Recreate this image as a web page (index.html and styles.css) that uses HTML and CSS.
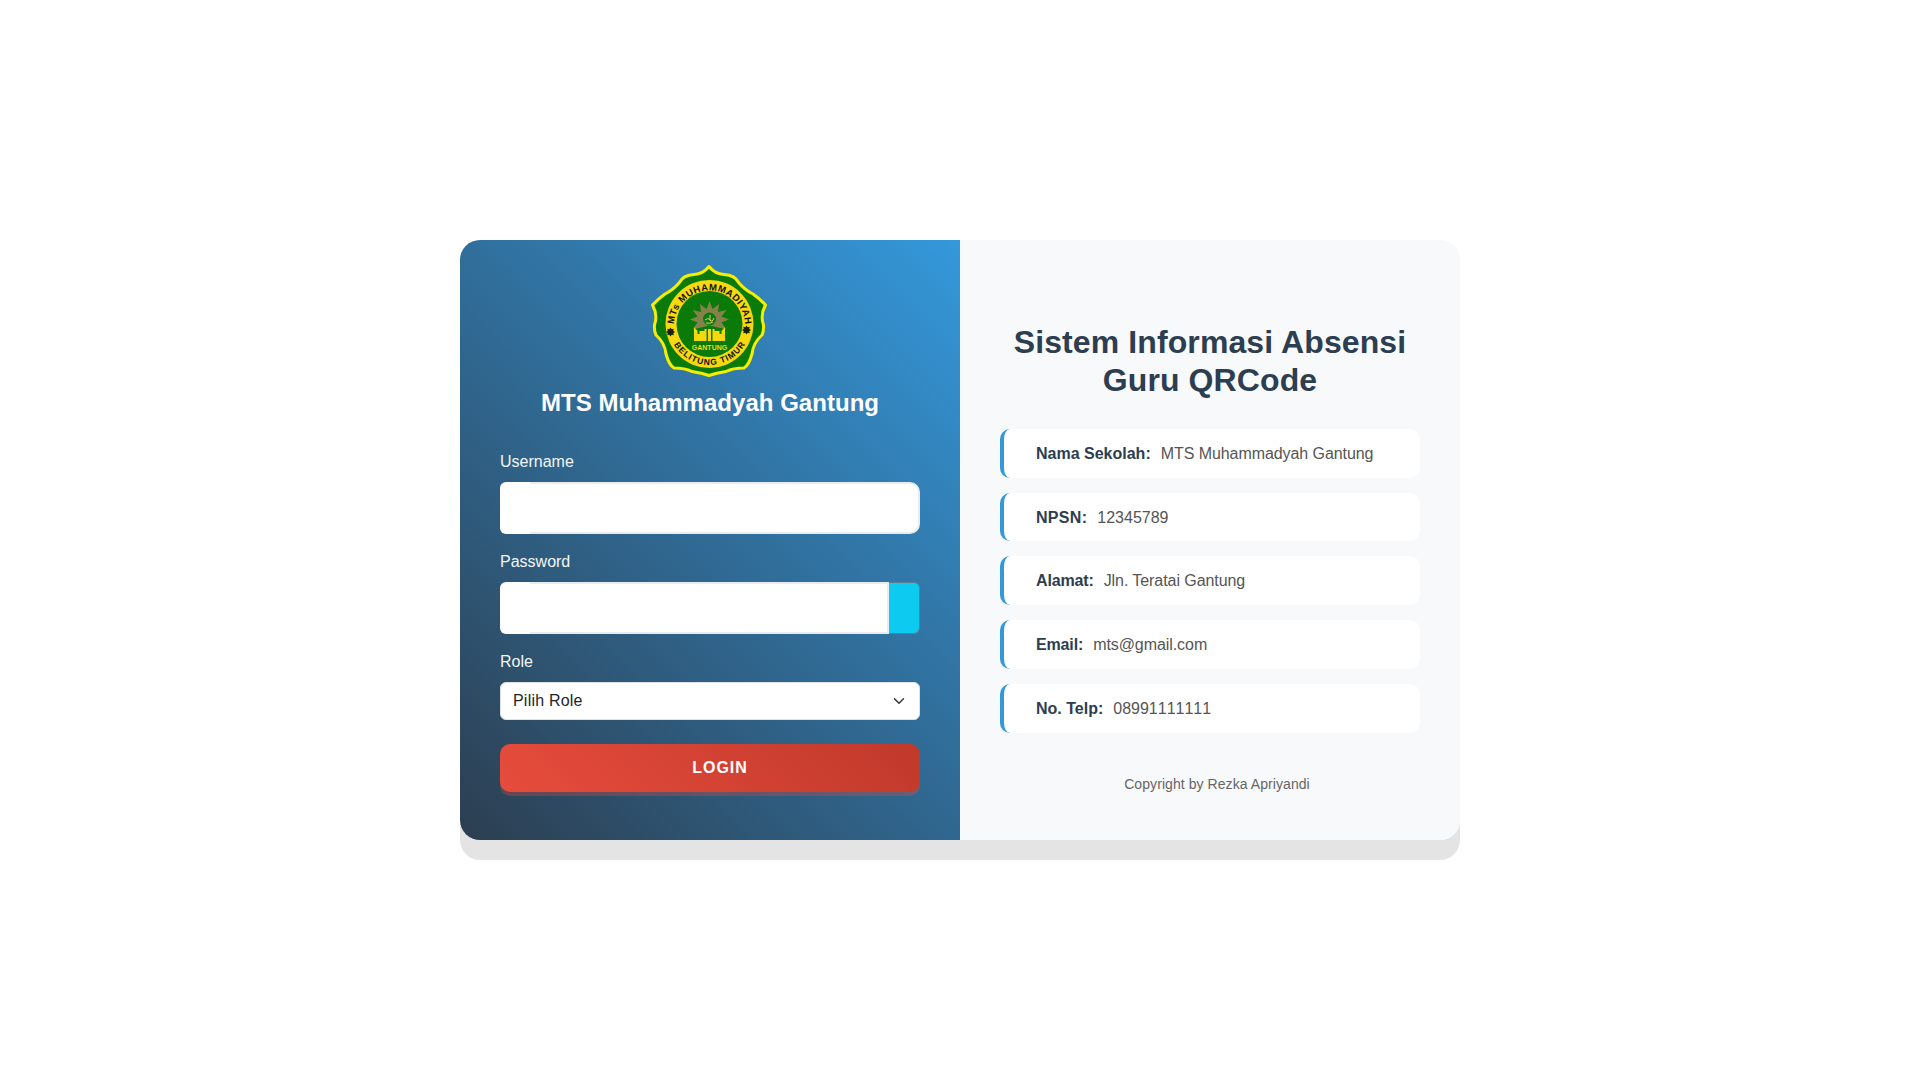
FILE: index.html
```html
<!DOCTYPE html>
<html lang="id">
<head>
<meta charset="utf-8">
<title>Sistem Informasi Absensi Guru QRCode</title>
<link rel="stylesheet" href="styles.css">
</head>
<body>
<main class="card">
  <section class="panel-left">
    <svg class="logo" viewBox="0 0 120 116" aria-label="Logo MTs Muhammadiyah Gantung">
      <defs>
        <path id="arc-top" d="M24 63 A35.500 35.500 0 0 1 95 63"/>
        <path id="arc-bottom" d="M18.500 61 A41 41 0 0 0 100.500 61"/>
      </defs>
      <path class="logo-lobes" d="M59 3.500 Q65 11 74 11.500 Q85 12 89 20 Q95 27 103 31 Q110 36 115.500 42 Q110 52 113.500 62 Q114 68 112 72 Q103 80 102 91 Q99 102 94 105 Q83 105 76 108.500 Q66 110 59 112.500 Q52 110 42 108.500 Q35 105 24 105 Q19 102 16 91 Q15 80 6 72 Q4 68 4.500 62 Q8 52 2.500 42 Q8 36 15 31 Q23 27 29 20 Q33 12 44 11.500 Q53 11 59 3.500Z"/>
      <circle class="logo-ring" cx="59.500" cy="61" r="44"/>
      <circle class="logo-core" cx="59.500" cy="61" r="33"/>
      <text class="logo-top"><textPath href="#arc-top" startOffset="50%" text-anchor="middle" textLength="108">MTs MUHAMMADIYAH</textPath></text>
      <text class="logo-bottom"><textPath href="#arc-bottom" startOffset="50%" text-anchor="middle" textLength="86">BELITUNG TIMUR</textPath></text>
      <path class="logo-dot" d="M20.500 64.500l1.200 1.800 2.100-.6-.6 2.100 1.800 1.200-1.800 1.200.6 2.100-2.100-.6-1.200 1.800-1.200-1.800-2.100.6.6-2.100-1.800-1.200 1.800-1.200-.6-2.100 2.100.6z"/>
      <path class="logo-dot" d="M96.500 62.500l1.200 1.800 2.100-.6-.6 2.100 1.800 1.200-1.800 1.200.6 2.100-2.100-.6-1.200 1.800-1.200-1.800-2.100.6.6-2.100-1.800-1.200 1.800-1.200-.6-2.100 2.100.6z"/>
      <path class="logo-star" d="M59.500 38l3 8 6.500-5-1 8 8.500-2-5 6.500 7.500 3-7.500 3 4.500 6.500-8-1.500-8.500-2-8.500 2-8 1.500 4.500-6.500-7.500-3 7.500-3-5-6.500 8.500 2-1-8 6.500 5z"/>
      <circle class="logo-seal" cx="59.500" cy="56" r="6.500"/>
      <path class="logo-swash" d="M55 57q3-3 5 0t4-2M56 60q4 1 7-1M60 52v5"/>
      <path class="logo-house" d="M44 64l3.500 4v3h2v-3h5v-2h2v12H44zM75 64l-3.500 4v3h-2v-3h-5v-2h-2v12h12.500zM58 66h3v12h-3z"/>
      <text class="logo-name" x="59.500" y="86.500" text-anchor="middle">GANTUNG</text>
    </svg>
    <h1 class="school">MTS Muhammadyah Gantung</h1>
    <form class="login-form">
      <div class="field">
        <label class="field-label" for="username">Username</label>
        <div class="input-group">
          <span class="addon"></span>
          <input class="text-input text-input-end" id="username" type="text">
        </div>
      </div>
      <div class="field">
        <label class="field-label" for="password">Password</label>
        <div class="input-group">
          <span class="addon"></span>
          <input class="text-input" id="password" type="password">
          <button class="toggle" type="button" aria-label="Tampilkan password"></button>
        </div>
      </div>
      <div class="field field-role">
        <label class="field-label" for="role">Role</label>
        <select class="role-select" id="role">
          <option>Pilih Role</option>
        </select>
      </div>
      <button class="login" type="button">LOGIN</button>
    </form>
  </section>
  <section class="panel-right">
    <h2 class="title">Sistem Informasi Absensi Guru QRCode</h2>
    <ul class="info-list">
      <li class="info-item"><strong class="info-key">Nama Sekolah:</strong><span class="info-text">MTS Muhammadyah Gantung</span></li>
      <li class="info-item"><strong class="info-key info-plain">NPSN:</strong><span class="info-digits">12345789</span></li>
      <li class="info-item"><strong class="info-key info-tight">Alamat:</strong><span class="info-text">Jln. Teratai Gantung</span></li>
      <li class="info-item"><strong class="info-key info-tight">Email:</strong><span class="info-text">mts@gmail.com</span></li>
      <li class="info-item"><strong class="info-key">No. Telp:</strong><span class="info-digits">08991111111</span></li>
    </ul>
    <p class="copyright">Copyright by Rezka Apriyandi</p>
  </section>
</main>
</body>
</html>
```
FILE: styles.css
```css
* { box-sizing: border-box; }
html, body { height: 100%; }
body {
  margin: 0;
  min-height: 100vh;
  display: flex;
  align-items: center;
  justify-content: center;
  background: #fff;
  font-family: "Liberation Sans", Arial, sans-serif;
  font-size: 16px;
  line-height: 1.5;
  color: #212529;
}
.card {
  width: 1000px;
  height: 600px;
  display: flex;
  border-radius: 20px;
  box-shadow: 0 20px 0 rgba(0, 0, 0, .105);
}
.panel-left {
  width: 500px;
  padding: 20px 40px 0;
  border-radius: 20px 0 0 20px;
  background: linear-gradient(45deg, #2c3e50, #3498db);
  color: #fff;
}
.logo { display: block; width: 120px; height: 116px; margin: 3px auto 0; }
.logo-lobes { fill: #0a7a08; stroke: #f6ee00; stroke-width: 3; stroke-linejoin: round; }
.logo-ring { fill: #f8d90f; }
.logo-core { fill: #0a7a08; }
.logo-top { font-size: 9.5px; font-weight: 700; fill: #111; }
.logo-bottom { font-size: 8.5px; font-weight: 700; fill: #111; }
.logo-dot { fill: #17210f; }
.logo-star { fill: #85814a; }
.logo-seal { fill: #0b7a10; }
.logo-swash { fill: none; stroke: #d8d56a; stroke-width: 1; }
.logo-house { fill: #f3d90d; }
.logo-name { font-size: 7px; font-weight: 700; fill: #f3d90d; }
.school {
  margin: 10px 0 32px;
  font-size: 24px;
  font-weight: 700;
  line-height: 1.2;
  text-align: center;
  letter-spacing: .03px;
}
.login-form { display: block; }
.field { margin-bottom: 16px; }
.field-role { margin-bottom: 24px; }
.field-label { display: block; margin-bottom: 8px; color: #f4f6f8; }
.input-group { display: flex; height: 52px; }
.addon {
  flex: 0 0 30px;
  background: #fff;
  border-radius: 6px 0 0 6px;
}
.text-input {
  flex: 1 1 auto;
  min-width: 0;
  height: 52px;
  padding: 12px;
  border: 2px solid #e9ecef;
  border-left: 0;
  border-radius: 0;
  background: #fff;
  font: inherit;
  outline: 0;
}
.text-input-end { border-radius: 0 10px 10px 0; }
.toggle {
  flex: 0 0 31px;
  height: 52px;
  padding: 0;
  border: 1px solid #5d7c96;
  border-left: 0;
  border-radius: 0 6px 6px 0;
  background: #0dcaf0;
}
.role-select {
  display: block;
  width: 100%;
  height: 38px;
  padding: 6px 36px 6px 12px;
  border: 1px solid #dee2e6;
  border-radius: 6px;
  appearance: none;
  background: #fff url("data:image/svg+xml,%3csvg xmlns='http://www.w3.org/2000/svg' viewBox='0 0 16 16'%3e%3cpath fill='none' stroke='%23343a40' stroke-linecap='round' stroke-linejoin='round' stroke-width='2' d='m2 5 6 6 6-6'/%3e%3c/svg%3e") no-repeat right 12px center / 16px 12px;
  color: #212529;
  font: inherit;
  letter-spacing: .2px;
}
.login {
  display: block;
  width: 100%;
  height: 48px;
  padding: 0 0 0 20px;
  border: 0;
  border-radius: 10px;
  background: linear-gradient(45deg, #e74c3c, #c0392b);
  box-shadow: 0 4px 0 rgba(231, 76, 60, .3);
  color: #fff;
  font: 700 16px "Liberation Sans", Arial, sans-serif;
  letter-spacing: 1px;
}
.panel-right {
  width: 500px;
  padding: 83px 40px 0;
  border-radius: 0 20px 20px 0;
  background: #f8f9fa;
}
.title {
  margin: 0 0 29px;
  font-size: 32px;
  font-weight: 700;
  line-height: 1.2;
  text-align: center;
  color: #2c3e50;
  letter-spacing: .1px;
}
.info-list { margin: 0; padding: 0; list-style: none; }
.info-item {
  margin-bottom: 15px;
  padding: 12.95px 15px 11.85px 32px;
  display: flex;
  border-left: 4px solid #3498db;
  border-radius: 10px;
  background: #fff;
  color: #555;
}
.info-key { margin-right: 10px; color: #2c3e50; font-weight: 700; }
.info-plain { letter-spacing: .3px; }
.info-tight { letter-spacing: -.15px; }
.info-text { letter-spacing: -.07px; }
.info-digits { font-kerning: none; }
.copyright {
  margin: 41px 0 0;
  padding-left: 14px;
  font-size: 14px;
  text-align: center;
  color: #666;
  letter-spacing: .07px;
}
```
